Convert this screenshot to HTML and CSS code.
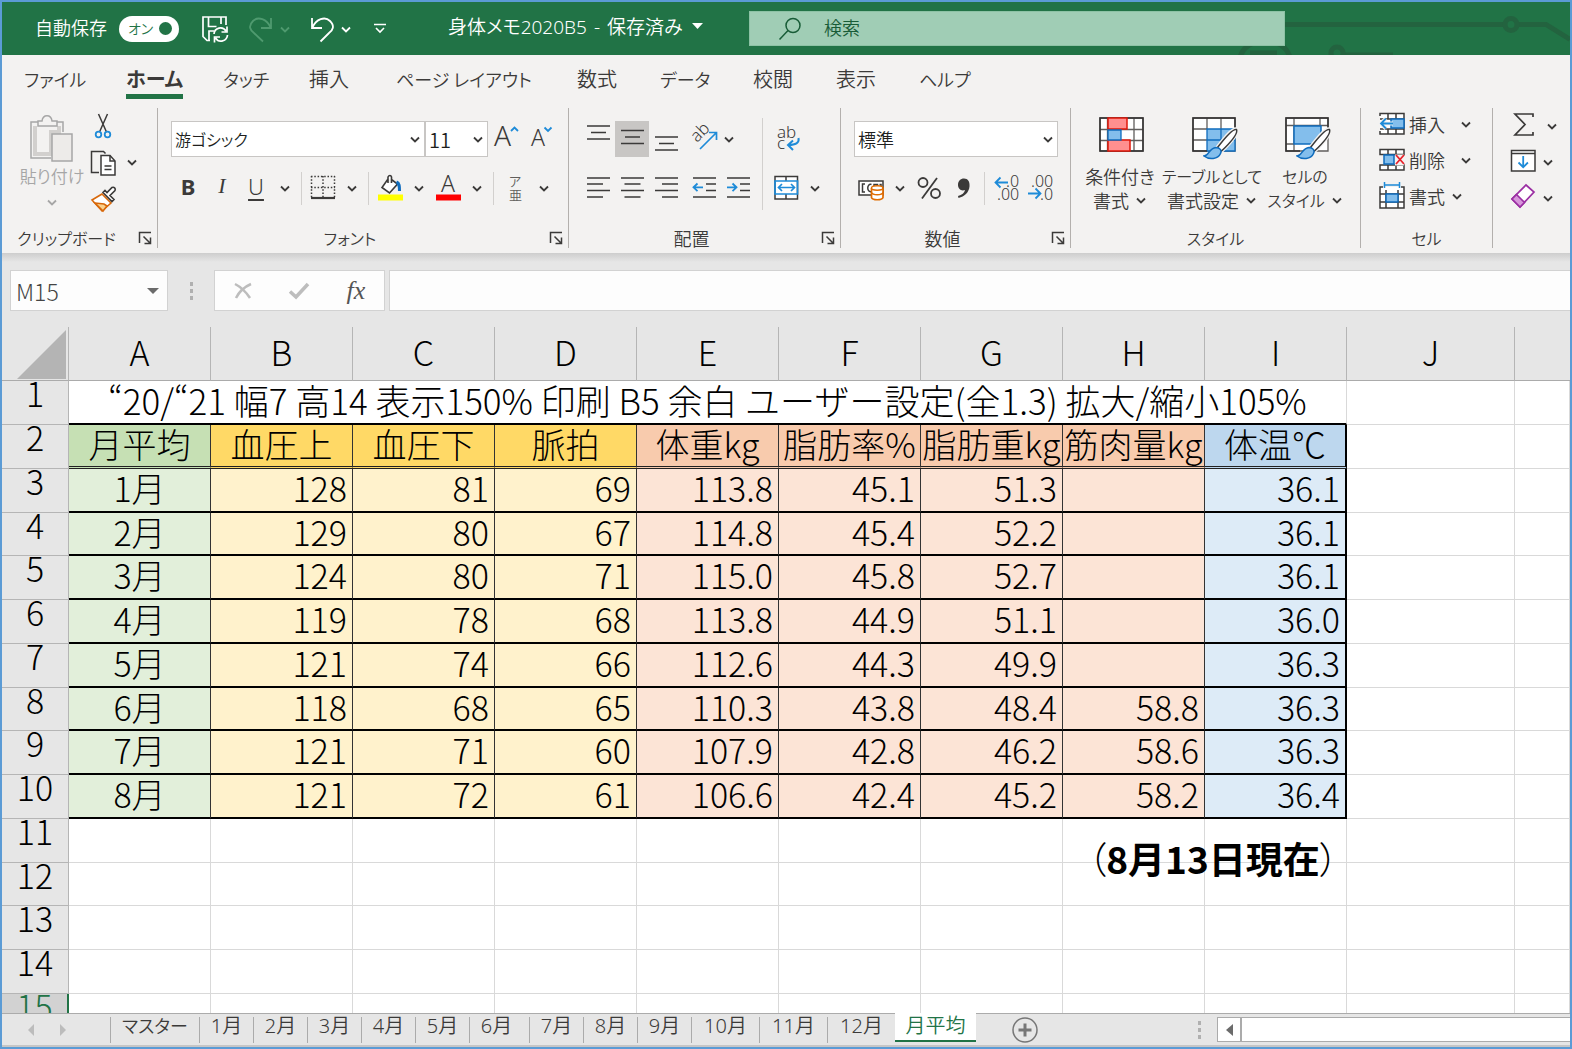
FILE: index.html
```html
<!DOCTYPE html>
<html lang="ja">
<head>
<meta charset="utf-8">
<title>身体メモ2020B5</title>
<link rel="stylesheet" href="styles.css">
</head>
<body>
<svg class="defs" aria-hidden="true">
  <symbol id="chev" viewBox="0 0 24 36"><path d="M8 16.5l4 4 4-4" fill="none" stroke="currentColor" stroke-width="1.8"/></symbol>
  <symbol id="launch" viewBox="0 0 14 14"><path d="M1.5 12V1.5H13M5.5 5.5l6.500 6.500M12.500 6.500v6h-6" fill="none" stroke="currentColor" stroke-width="1.500"/></symbol>
  <symbol id="brush" viewBox="0 0 36 34"><path d="M33.500 2.500c-3-1-8 3.500-19 18l4 3.500C29 14 35 6 33.500 2.500z" fill="#fff" stroke="#f3f2f1" stroke-width="4"/><path d="M33.500 2.500c-3-1-8 3.500-19 18l4 3.500C29 14 35 6 33.500 2.500z" fill="#fff" stroke="#3b3a39" stroke-width="1.500"/><path d="M1 29c5 0 5-8 12-8.500 4 0 6 3 4.500 6C15 32.500 6 33 1 29z" fill="#83beec" stroke="#0f6cbd" stroke-width="1.500"/></symbol>
</svg>
<div class="app">
  <header class="titlebar">
    <svg class="circuit" viewBox="0 0 340 53" width="340" height="53" fill="none" stroke="#23633f" stroke-width="5" aria-hidden="true"><path d="M40 22.500h234M286 22.500h30l24 15M113 53h50"/><circle cx="281" cy="22.500" r="6"/><circle cx="107" cy="51" r="6"/><path d="M10 55c4-12 14-16 26-16s20 5 24 16M20 51h27"/></svg>
    <div class="quick">
      <span class="autosave">自動保存</span>
      <button class="toggle" aria-label="自動保存 オン"><span>オン</span><i></i></button>
      <button class="qbtn save" aria-label="保存"><svg width="28" height="28" viewBox="0 0 28 28" fill="none" stroke="#fff" stroke-width="1.700"><path d="M9 25.500H6L2 21.500V2h23v8M7.500 2v9.500h8M20 2v7M8 25v-9h5"/><path d="M13 19a6.500 6.500 0 0 1 12-3M26 11.500V17h-5.500M26.500 20a6.500 6.500 0 0 1-12 3M13.500 27.500V22H19"/></svg></button>
      <button class="qbtn redo" aria-label="やり直し"><svg width="24" height="28" viewBox="0 0 24 28" fill="none" stroke="currentColor" stroke-width="1.800"><path d="M22 3v10H12M21.500 12.500C18 4 9 1 4 6s-3 9 1 12l9 8.500"/></svg><svg class="chev"><use href="#chev"/></svg></button>
      <button class="qbtn undo" aria-label="元に戻す"><svg width="24" height="28" viewBox="0 0 24 28" fill="none" stroke="currentColor" stroke-width="1.800"><path d="M2 3v10h10M2.500 12.500C6 4 15 1 20 6s3 9-1 12l-8.500 8.500"/></svg><svg class="chev"><use href="#chev"/></svg></button>
      <button class="qbtn custom" aria-label="クイック アクセス ツール バーのカスタマイズ"><svg width="12" height="12" viewBox="0 0 12 12" fill="none" stroke="#fff" stroke-width="1.600"><path d="M0 1.500h12M2 5l4 4 4-4"/></svg></button>
    </div>
    <button class="doc">身体メモ2020B5 <span>-</span> 保存済み <svg width="11" height="6" viewBox="0 0 11 6"><path d="M0 0h11L5.500 6z" fill="#fff"/></svg></button>
    <label class="search"><svg width="24" height="24" viewBox="0 0 24 24" fill="none" stroke="#185c37" stroke-width="1.500"><circle cx="15" cy="8.500" r="7"/><path d="M10 13.500L1.500 22.500"/></svg><input type="text" placeholder="検索" aria-label="検索"></label>
  </header>

  <nav class="tabs">
    <a href="#file" class="kana">ファイル</a><a href="#home" class="on">ホーム</a><a href="#touch" class="kana">タッチ</a><a href="#insert">挿入</a><a href="#layout" class="kana">ページ レイアウト</a><a href="#formula">数式</a><a href="#data" class="kana">データ</a><a href="#review">校閲</a><a href="#view">表示</a><a href="#help" class="kana">ヘルプ</a>
  </nav>

  <div class="ribbon">
    <section class="group g-clip">
      <div class="body split">
        <button class="paste" disabled>
          <svg width="44" height="48" viewBox="0 0 44 48" fill="none" stroke="#a6a6a6" stroke-width="1.500"><path d="M8 8H1v36h20M26 8h7v10"/><path d="M5 12v28h16V18h8v-6" stroke="#d2d0ce" stroke-width="4"/><path d="M8 12V7h4c1-7 9-7 10 0h5v5z" fill="#f3f2f1"/><path d="M22 20h20v27H22z" fill="#edebe9"/></svg>
          <span>貼り付け</span>
          <svg class="chev short"><use href="#chev"/></svg>
        </button>
        <div class="stack">
          <div class="row"><button class="ib" aria-label="切り取り"><svg viewBox="0 0 34 36" fill="none" stroke="#3b3a39" stroke-width="1.500"><path d="M12.500 6l8 18M21.500 6l-8 18"/><g stroke="#1e8bd8" stroke-width="1.800"><circle cx="12.500" cy="26.500" r="2.800"/><circle cx="21.500" cy="26.500" r="2.800"/></g></svg></button></div>
          <div class="row"><button class="ib" aria-label="コピー"><svg viewBox="0 0 34 36" fill="none" stroke="#3b3a39" stroke-width="1.500"><path d="M13 28.500H5.500v-21h12l2 2"/><path d="M15 11.500h9l5 5.500v14H15z" fill="#fff"/><path d="M24 11.500V17h5M18.500 22h7M18.500 25.500h7"/></svg></button><button class="cb" aria-label="コピーのオプション"><svg class="chev"><use href="#chev"/></svg></button></div>
          <div class="row"><button class="ib" aria-label="書式のコピー"><svg viewBox="0 0 34 36" fill="none" stroke-width="1.600"><path d="M16 14L6 20l10 11 9-8z" fill="#fff" stroke="#d8690c"/><path d="M9 23l9 1 3 2-4 5z" fill="#fbd28d" stroke="#d8690c"/><path d="M17 12.500l9 9 2-2-4-4 5-5c1-2-1-4-3-3l-5 5-2-2z" fill="#fff" stroke="#3b3a39"/></svg></button></div>
        </div>
      </div>
      <footer class="kana"><span>クリップボード</span><button class="launch" aria-label="クリップボードの詳細"><svg><use href="#launch"/></svg></button></footer>
    </section>

    <section class="group g-font">
      <div class="body lines">
        <div class="row">
          <label class="sel w-font"><select class="kana" aria-label="フォント"><option>游ゴシック</option></select><svg class="chev"><use href="#chev"/></svg></label>
          <label class="sel w-size"><select aria-label="フォント サイズ"><option>11</option></select><svg class="chev"><use href="#chev"/></svg></label>
          <button class="ib" aria-label="拡大"><svg viewBox="0 0 34 36"><text x="6" y="25" font-size="28">A</text><path d="M23 10l3.500-3.500L30 10" fill="none" stroke="#1e8bd8" stroke-width="1.800"/></svg></button>
          <button class="ib" aria-label="縮小"><svg viewBox="0 0 34 36"><text x="9" y="25" font-size="23">A</text><path d="M22.500 6.500L26 10l3.500-3.500" fill="none" stroke="#1e8bd8" stroke-width="1.800"/></svg></button>
        </div>
        <div class="row">
          <button class="ib txt bold">B</button><button class="ib txt italic">I</button><button class="ib txt under">U</button><button class="cb" aria-label="下線"><svg class="chev"><use href="#chev"/></svg></button><i class="sep"></i>
          <button class="ib" aria-label="罫線"><svg viewBox="0 0 34 36" fill="none" stroke="#3b3a39"><path d="M5 6.500h24M5 17.500h24M5.500 6v22M17 6v22M28.500 6v22" stroke-width="1.500" stroke-dasharray="1.500 1.800"/><path d="M5 28h24" stroke-width="2.200"/></svg></button><button class="cb" aria-label="罫線の種類"><svg class="chev"><use href="#chev"/></svg></button><i class="sep"></i>
          <button class="ib" aria-label="塗りつぶし"><svg viewBox="0 0 34 36" fill="none"><path d="M15 9l-6 8.500 7.500 5.500 8-9-6-4.500M15 13V7c1-2 3-2 3.500 0v6" stroke="#3b3a39" stroke-width="1.600" fill="#fff"/><path d="M23.500 12c3 1 3 4 3 9" stroke="#0f6cbd" stroke-width="3"/><path d="M5 24.500h25v6H5z" fill="#ff0"/></svg></button><button class="cb" aria-label="塗りつぶしの色"><svg class="chev"><use href="#chev"/></svg></button>
          <button class="ib" aria-label="文字色"><svg viewBox="0 0 34 36"><text x="10" y="22" font-size="23">A</text><path d="M5 24.500h25v6H5z" fill="#f00"/></svg></button><button class="cb" aria-label="フォントの色"><svg class="chev"><use href="#chev"/></svg></button><i class="sep"></i>
          <button class="ib" aria-label="ふりがな"><svg viewBox="0 0 34 36" class="dim"><text x="11" y="16" font-size="13">ア</text><text x="11" y="30" font-size="13">亜</text></svg></button><button class="cb" aria-label="ふりがなの設定"><svg class="chev"><use href="#chev"/></svg></button>
        </div>
      </div>
      <footer class="kana"><span>フォント</span><button class="launch" aria-label="フォントの詳細"><svg><use href="#launch"/></svg></button></footer>
    </section>

    <section class="group g-align">
      <div class="body split">
        <div class="lines">
          <div class="row">
            <button class="ib" aria-label="上揃え"><svg viewBox="0 0 34 36" class="ln"><path d="M6 5h23M10 11.500h15M6 18h23"/></svg></button>
            <button class="ib on" aria-label="上下中央揃え"><svg viewBox="0 0 34 36" class="ln"><path d="M6 9.500h23M10 16h15M6 22.500h23"/></svg></button>
            <button class="ib" aria-label="下揃え"><svg viewBox="0 0 34 36" class="ln"><path d="M6 16h23M10 22.500h15M6 29h23"/></svg></button>
            <button class="ib shift" aria-label="方向"><svg viewBox="0 0 34 36"><text x="10" y="22" font-size="17" transform="rotate(-45 10 22)">ab</text><path d="M13 28L29 12M22 11.500h7.500V19" fill="none" stroke="#1e8bd8" stroke-width="1.700"/></svg></button><button class="cb slim" aria-label="方向の種類"><svg class="chev"><use href="#chev"/></svg></button>
          </div>
          <div class="row">
            <button class="ib" aria-label="左揃え"><svg viewBox="0 0 34 36" class="ln"><path d="M6 8h23M6 14h16M6 20.500h23M6 27h16"/></svg></button>
            <button class="ib" aria-label="中央揃え"><svg viewBox="0 0 34 36" class="ln"><path d="M6 8h23M9.500 14h16M6 20.500h23M9.500 27h16"/></svg></button>
            <button class="ib" aria-label="右揃え"><svg viewBox="0 0 34 36" class="ln"><path d="M6 8h23M13 14h16M6 20.500h23M13 27h16"/></svg></button>
            <button class="ib shift" aria-label="インデントを減らす"><svg viewBox="0 0 34 36" class="ln"><path d="M6 8h23M19 14h10M19 20.500h10M6 27h23"/><path class="bl" d="M16 17.300H7M10.500 13.500l-4 3.800 4 3.800"/></svg></button>
            <button class="ib" aria-label="インデントを増やす"><svg viewBox="0 0 34 36" class="ln"><path d="M6 8h23M19 14h10M19 20.500h10M6 27h23"/><path class="bl" d="M6 17.300h9M11.500 13.500l4 3.800-4 3.800"/></svg></button>
          </div>
        </div>
        <i class="sep tall"></i>
        <div class="lines">
          <div class="row"><button class="ib" aria-label="折り返して全体を表示"><svg viewBox="0 0 34 36"><text x="8" y="17" font-size="17">ab</text><text x="8" y="28" font-size="17">c</text><path d="M29.500 17c1 5-3 7-10 7M24 19.500L19 24l5 5" fill="none" stroke="#1e8bd8" stroke-width="2"/></svg></button></div>
          <div class="row"><button class="ib" aria-label="セルを結合して中央揃え"><svg viewBox="0 0 34 36" fill="none" stroke="#3b3a39" stroke-width="1.500"><path d="M6 6.500h22.500V29H6zM17 6v5M17 24v5" fill="#fff"/><path d="M6 11h22.500v13H6zM9.500 17.500h16M13 14l-3.500 3.500L13 21M22 14l3.500 3.500L22 21" stroke="#1e8bd8" stroke-width="1.700"/></svg></button><button class="cb" aria-label="結合の種類"><svg class="chev"><use href="#chev"/></svg></button></div>
        </div>
      </div>
      <footer><span>配置</span><button class="launch" aria-label="配置の詳細"><svg><use href="#launch"/></svg></button></footer>
    </section>

    <section class="group g-num">
      <div class="body lines">
        <div class="row"><label class="sel w-num"><select aria-label="数値の書式"><option>標準</option></select><svg class="chev"><use href="#chev"/></svg></label></div>
        <div class="row">
          <button class="ib" aria-label="通貨"><svg viewBox="0 0 34 36" fill="none" stroke="#3b3a39" stroke-width="1.500"><path d="M5 11h24v14H5z" fill="#fff"/><path d="M11 14H8.500v8H11M17.500 14.500c-5-1.500-5 8.500 0 7M20 19.500V14.500h3.500V18M25.500 14.500h1.500v4"/><path d="M17.500 18v9.500c1 3 10.500 3 11.500 0V18" fill="#fff" stroke="#e06c00" stroke-width="1.700"/><ellipse cx="23.200" cy="18" rx="5.700" ry="2.200" fill="#fff" stroke="#e06c00"/><path d="M17.500 22.500c1 3 10.500 3 11.500 0" stroke="#e06c00"/></svg></button><button class="cb" aria-label="通貨の種類"><svg class="chev"><use href="#chev"/></svg></button>
          <button class="ib" aria-label="パーセント"><svg viewBox="0 0 34 36" fill="none" stroke="#3b3a39" stroke-width="1.800"><circle cx="11" cy="12.500" r="4.500"/><circle cx="23.500" cy="23.500" r="4.500"/><path d="M25 8L10 28.500"/></svg></button>
          <button class="ib" aria-label="桁区切り"><svg viewBox="0 0 34 36"><path d="M18 8.500c4 0 6 3 5.500 8-.6 6-5 10-11 11.500l-.5-2c4-1 6.500-3 7-6-4 1.500-7-1.500-7-5 0-4 2.500-6.500 6-6.500z" fill="#3b3a39"/></svg></button><i class="sep"></i>
          <button class="ib" aria-label="小数点以下の表示桁数を増やす"><svg viewBox="0 0 34 36"><text x="17" y="17" font-size="16">.0</text><text x="8" y="30" font-size="16">.00</text><path class="bl" d="M19 12.500H6.500M11.500 7.500l-5 5 5 5"/></svg></button>
          <button class="ib" aria-label="小数点以下の表示桁数を減らす"><svg viewBox="0 0 34 36"><text x="8" y="17" font-size="16">.00</text><text x="17" y="30" font-size="16">.0</text><path class="bl" d="M5 23.500h12.500M12.500 18.500l5 5-5 5"/></svg></button>
        </div>
      </div>
      <footer><span>数値</span><button class="launch" aria-label="数値の詳細"><svg><use href="#launch"/></svg></button></footer>
    </section>

    <section class="group g-style">
      <div class="body split">
        <button class="big b1"><svg width="48" height="44" viewBox="0 0 48 44" fill="none" stroke="#605e5c" stroke-width="1.300"><path d="M4 2h43v33H4z" fill="#fff"/><path d="M4 13.500h43M4 24.500h43M11.500 2v33M38 2v33"/><path d="M4 2h43v33H4z" stroke="#323130" stroke-width="1.500"/><path d="M12 2h19v11H12zM12 24h22v11H12z" fill="#ff8f8f" stroke="#e0190b" stroke-width="1.500"/><path d="M12 14h13v10H12z" fill="#83beec" stroke="#0f6cbd"/></svg><span>条件付き</span><span>書式<svg class="chev short"><use href="#chev"/></svg></span></button>
        <button class="big b2"><svg width="42" height="44" viewBox="0 0 42 44" fill="none" stroke="#605e5c" stroke-width="1.300"><path d="M2 2h42v33H2z" fill="#fff"/><path d="M16 13h28v22H16z" fill="#83beec" stroke="none"/><path d="M2 13h14M2 24h14M16 2v11M30 2v11"/><path d="M16 35V13h28v22zM16 24h28M30 13v22" stroke="#0f6cbd"/><path d="M44 11V2H2v33h14" stroke="#323130" stroke-width="1.500"/><use href="#brush" x="12" y="11" width="36" height="34"/></svg><span class="kana">テーブルとして</span><span>書式設定<svg class="chev short"><use href="#chev"/></svg></span></button>
        <button class="big b3"><svg width="42" height="44" viewBox="0 0 42 44" fill="none" stroke="#605e5c" stroke-width="1.300"><path d="M2 2h42v33H2z" fill="#fff"/><path d="M2 9.500h42M10 2v33M36 2v8M2 28h8"/><path d="M10 10h27v18H10z" fill="#83beec" stroke="#0f6cbd" stroke-width="1.500"/><path d="M44 11V2H2v33h14" stroke="#323130" stroke-width="1.500"/><use href="#brush" x="12" y="11" width="36" height="34"/></svg><span class="kana">セルの</span><span class="kana">スタイル<svg class="chev short"><use href="#chev"/></svg></span></button>
      </div>
      <footer class="kana"><span>スタイル</span></footer>
    </section>

    <section class="group g-cell">
      <div class="body">
        <button class="cmd"><svg width="26" height="24" viewBox="0 0 26 24" fill="none" stroke="#3b3a39" stroke-width="1.500"><path d="M1 4V1.500h24V22H1v-3M9 2v5M17 2v5M9 17v5M17 17v5M1 7h24M1 17h24" fill="#fff"/><path d="M12 7h13v9H12z" fill="#83beec" stroke="#0f6cbd"/><path d="M14 11.500H2M7 6.500l-5 5 5 5" stroke="#f3f2f1" stroke-width="4"/><path d="M14 11.500H2M7 6.500l-5 5 5 5" stroke="#1e8bd8" stroke-width="1.800"/></svg><span class="wide">挿入</span><svg class="chev"><use href="#chev"/></svg></button>
        <button class="cmd"><svg width="26" height="24" viewBox="0 0 26 24" fill="none" stroke="#3b3a39" stroke-width="1.500"><path d="M1 1.500h24v5H1zM1 17h24v5H1zM9 2v5M17 2v5M9 17v5M17 17v5" fill="#fff"/><path d="M5 7h10v9H5z" fill="#83beec" stroke="#0f6cbd"/><path d="M16 6.500h9v11h-9z" fill="#f3f2f1" stroke="none"/><path d="M17 7l8 9M25 7l-8 9" stroke="#e8222a" stroke-width="1.800"/></svg><span class="wide">削除</span><svg class="chev"><use href="#chev"/></svg></button>
        <button class="cmd"><svg width="26" height="28" viewBox="0 0 26 28" fill="none" stroke="#3b3a39" stroke-width="1.500"><path d="M4 5H1v21h24V5h-3M1 12h24M1 20h24M7 8v18M19 8v18" fill="#fff"/><path d="M7 12h12v8H7z" fill="#83beec" stroke="#0f6cbd"/><path d="M5.500 3h15M5.500 0v6M20.500 0v6" stroke="#1e8bd8"/></svg><span>書式</span><svg class="chev"><use href="#chev"/></svg></button>
      </div>
      <footer class="kana"><span>セル</span></footer>
    </section>

    <section class="group g-edit">
      <div class="body">
        <div class="row"><button class="ib" aria-label="合計"><svg viewBox="0 0 34 36" fill="none" stroke="#3b3a39" stroke-width="1.700"><path d="M27 9V6H9l10 10.500L9 27h18v-3"/></svg></button><button class="cb" aria-label="合計の種類"><svg class="chev"><use href="#chev"/></svg></button></div>
        <div class="row"><button class="ib" aria-label="フィル"><svg viewBox="0 0 34 36" fill="none" stroke="#3b3a39" stroke-width="1.500"><path d="M5.500 6.500h23.500V27H5.500z" fill="#fff"/><path d="M5.500 9.500h23.500"/><path class="bl" d="M17.200 12v11M12.500 18.500l4.700 4.700 4.700-4.700"/></svg></button><button class="cb slim" aria-label="フィルの種類"><svg class="chev"><use href="#chev"/></svg></button></div>
        <div class="row"><button class="ib" aria-label="クリア"><svg viewBox="0 0 34 36" fill="none" stroke="#9b2fa3" stroke-width="1.700"><path d="M20 5l8 7-14 15-8-8z" fill="#fff"/><path d="M10.500 14.500l8 8L14 27l-8-8z" fill="#d796db"/></svg></button><button class="cb slim" aria-label="クリアの種類"><svg class="chev"><use href="#chev"/></svg></button></div>
      </div>
    </section>
  </div>

  <div class="formula">
    <label class="namebox"><input type="text" value="M15" aria-label="名前ボックス"><svg width="12" height="6" viewBox="0 0 12 6"><path d="M0 0h12L6 6z" fill="#6b6b6b"/></svg></label>
    <span class="dots"><i></i><i></i><i></i></span>
    <div class="fxbox">
      <button aria-label="キャンセル"><svg width="18" height="18" viewBox="0 0 18 18" fill="none" stroke="#bdbdbd" stroke-width="2.500"><path d="M1 2c6 3 11 8 15 14M17 2C10 5 5 10 2 16"/></svg></button>
      <button aria-label="入力"><svg width="20" height="18" viewBox="0 0 20 18" fill="none" stroke="#bdbdbd" stroke-width="3.500"><path d="M1 9.500l6 5.500L19 2"/></svg></button>
      <button class="fx" aria-label="関数の挿入">fx</button>
    </div>
    <input class="fxinput" type="text" aria-label="数式バー">
  </div>

  <main class="sheet">
    <table>
      <colgroup><col class="c-row"><col class="c-data" span="9"><col class="c-j"><col></colgroup>
      <thead><tr><th class="corner"><svg width="49" height="49" viewBox="0 0 49 49"><path d="M49 0v49H0z" fill="#b4b4b4"/></svg></th><th>A</th><th>B</th><th>C</th><th>D</th><th>E</th><th>F</th><th>G</th><th>H</th><th>I</th><th>J</th><th></th></tr></thead>
      <tbody>
        <tr class="title"><th>1</th><td colspan="9">“20/“21 幅7 高14 表示150% 印刷 B5 余白 ユーザー設定(全1.3) 拡大/縮小105%</td><td></td><td></td></tr>
        <tr class="head"><th>2</th><td class="g">月平均</td><td class="y">血圧上</td><td class="y">血圧下</td><td class="y">脈拍</td><td class="o">体重kg</td><td class="o">脂肪率%</td><td class="o">脂肪重kg</td><td class="o">筋肉量kg</td><td class="b">体温℃</td><td></td><td></td></tr>
        <tr class="data"><th>3</th><td class="g">1月</td><td class="y">128</td><td class="y">81</td><td class="y">69</td><td class="o">113.8</td><td class="o">45.1</td><td class="o">51.3</td><td class="o"></td><td class="b">36.1</td><td></td><td></td></tr>
        <tr class="data"><th>4</th><td class="g">2月</td><td class="y">129</td><td class="y">80</td><td class="y">67</td><td class="o">114.8</td><td class="o">45.4</td><td class="o">52.2</td><td class="o"></td><td class="b">36.1</td><td></td><td></td></tr>
        <tr class="data"><th>5</th><td class="g">3月</td><td class="y">124</td><td class="y">80</td><td class="y">71</td><td class="o">115.0</td><td class="o">45.8</td><td class="o">52.7</td><td class="o"></td><td class="b">36.1</td><td></td><td></td></tr>
        <tr class="data"><th>6</th><td class="g">4月</td><td class="y">119</td><td class="y">78</td><td class="y">68</td><td class="o">113.8</td><td class="o">44.9</td><td class="o">51.1</td><td class="o"></td><td class="b">36.0</td><td></td><td></td></tr>
        <tr class="data"><th>7</th><td class="g">5月</td><td class="y">121</td><td class="y">74</td><td class="y">66</td><td class="o">112.6</td><td class="o">44.3</td><td class="o">49.9</td><td class="o"></td><td class="b">36.3</td><td></td><td></td></tr>
        <tr class="data"><th>8</th><td class="g">6月</td><td class="y">118</td><td class="y">68</td><td class="y">65</td><td class="o">110.3</td><td class="o">43.8</td><td class="o">48.4</td><td class="o">58.8</td><td class="b">36.3</td><td></td><td></td></tr>
        <tr class="data"><th>9</th><td class="g">7月</td><td class="y">121</td><td class="y">71</td><td class="y">60</td><td class="o">107.9</td><td class="o">42.8</td><td class="o">46.2</td><td class="o">58.6</td><td class="b">36.3</td><td></td><td></td></tr>
        <tr class="data"><th>10</th><td class="g">8月</td><td class="y">121</td><td class="y">72</td><td class="y">61</td><td class="o">106.6</td><td class="o">42.4</td><td class="o">45.2</td><td class="o">58.2</td><td class="b">36.4</td><td></td><td></td></tr>
        <tr><th>11</th><td></td><td></td><td></td><td></td><td></td><td></td><td></td><td></td><td></td><td></td><td></td></tr>
        <tr><th>12</th><td></td><td></td><td></td><td></td><td></td><td></td><td></td><td></td><td></td><td></td><td></td></tr>
        <tr><th>13</th><td></td><td></td><td></td><td></td><td></td><td></td><td></td><td></td><td></td><td></td><td></td></tr>
        <tr><th>14</th><td></td><td></td><td></td><td></td><td></td><td></td><td></td><td></td><td></td><td></td><td></td></tr>
        <tr class="current"><th>15</th><td></td><td></td><td></td><td></td><td></td><td></td><td></td><td></td><td></td><td></td><td></td></tr>
      </tbody>
    </table>
    <div class="note"><span>（</span>8月13日現在<span>）</span></div>
  </main>

  <footer class="sheets">
    <div class="nav"><button aria-label="前のシート"><svg width="6" height="12" viewBox="0 0 6 12"><path d="M6 0v12L0 6z" fill="#bcbcbc"/></svg></button><button aria-label="次のシート"><svg width="6" height="12" viewBox="0 0 6 12"><path d="M0 0v12l6-6z" fill="#bcbcbc"/></svg></button></div>
    <button class="tab master kana">マスター</button><button class="tab">1月</button><button class="tab">2月</button><button class="tab">3月</button><button class="tab">4月</button><button class="tab">5月</button><button class="tab june">6月</button><button class="tab">7月</button><button class="tab">8月</button><button class="tab">9月</button><button class="tab two">10月</button><button class="tab two">11月</button><button class="tab two">12月</button><button class="tab active">月平均</button>
    <button class="add" aria-label="新しいシート"><svg width="26" height="26" viewBox="0 0 26 26" fill="none" stroke="#767676"><circle cx="13" cy="13" r="12" stroke-width="1.500"/><path d="M13 6.500v13M6.500 13h13" stroke-width="3"/></svg></button>
    <span class="dots"><i></i><i></i><i></i></span>
    <div class="scroll"><button aria-label="左へスクロール"><svg width="7" height="12" viewBox="0 0 7 12"><path d="M7 0v12L0 6z" fill="#6b6b6b"/></svg></button><div class="track"></div></div>
  </footer>
</div>
</body>
</html>
```
FILE: styles.css
```css
* { box-sizing: border-box; }
body {
  margin: 0;
  font-family: "Noto Sans CJK JP", sans-serif;
  font-size: 18px;
  font-weight: 350;
  color: #3b3a39;
}
button, input, select { font: inherit; color: inherit; }
button { border: 0; padding: 0; background: none; }
svg { flex: none; display: block; overflow: visible; }
.defs { position: absolute; width: 0; height: 0; }
.app {
  display: flex;
  flex-direction: column;
  height: 100vh;
  border: 2px solid #5b9bd5;
  background: #e6e6e6;
  overflow: hidden;
}
.chev { width: 24px; height: 36px; }
.chev.short { margin-top: -6px; margin-bottom: -6px; }

/* title bar */
.titlebar {
  position: relative;
  display: flex;
  align-items: center;
  flex: none;
  height: 53px;
  padding-right: 285px;
  background: #217346;
  color: #fff;
  font-feature-settings: "palt";
  overflow: hidden;
}
.circuit { position: absolute; right: 0; top: 0; }
.quick { display: flex; align-items: center; width: 444px; padding-left: 33px; }
.autosave { width: 84px; padding-bottom: 4px; white-space: nowrap; }
.toggle {
  display: flex;
  align-items: center;
  justify-content: space-between;
  width: 60px;
  height: 26px;
  padding: 0 7px 0 9px;
  border-radius: 13px;
  background: #fff;
  color: #217346;
  font-size: 14px;
  line-height: 22px;
}
.toggle span { padding-bottom: 2px; }
.toggle i { width: 13px; height: 13px; border-radius: 50%; background: #217346; }
.qbtn { display: flex; align-items: center; height: 36px; color: #fff; }
.save { margin-left: 22px; }
.redo { margin-left: 20px; color: #4f9a6f; }
.undo { margin-left: 13px; }
.custom { margin-left: 16px; }
.doc { display: flex; align-items: center; gap: 7px; width: 303px; padding: 0 0 6px 2px; font-family: "Noto Sans", "Noto Sans CJK JP", sans-serif; font-size: 19px; white-space: nowrap; }
.doc svg { margin-left: 2px; }
.search {
  position: relative;
  display: flex;
  align-items: center;
  gap: 22px;
  flex: 1;
  height: 35px;
  padding-left: 28px;
  background: #a0cdb5;
  border: 1px solid #8dc2a5;
  color: #185c37;
}
.search input { flex: 1; min-width: 0; border: 0; background: none; padding: 0 0 3px; outline: 0; }
.search input::placeholder { color: #185c37; opacity: 1; }

/* ribbon tabs */
.tabs {
  display: grid;
  grid-template-columns: 102px 97px 86px 87px 181px 83px 93px 83px 83px 1fr;
  flex: none;
  height: 50px;
  padding-left: 22px;
  background: #f3f2f1;
  font-size: 20px;
  line-height: 48px;
  font-feature-settings: "palt";
}
.tabs a { justify-self: start; height: 44px; color: inherit; text-decoration: none; white-space: nowrap; }
.tabs .kana { font-size: 18px; }
.tabs .on { font-weight: 700; border-bottom: 5px solid #217346; }

/* ribbon */
.ribbon { display: flex; flex: none; height: 148px; padding: 3px 0 5px; background: #f3f2f1; font-feature-settings: "palt"; }
.ribbon .kana { font-size: 16px; }
.group { display: flex; flex-direction: column; flex: none; border-right: 1px solid #b3b0ad; }
.g-clip { width: 156px; }
.g-font { width: 411px; }
.g-align { width: 272px; }
.g-num { width: 230px; }
.g-style { width: 290px; }
.g-cell { width: 132px; }
.g-edit { flex: 1; border: 0; }
.body { flex: 1; }
.split { display: flex; }
.lines { display: flex; flex-direction: column; gap: 13px; padding-top: 13px; }
.g-font .body, .g-num .body { padding-left: 13px; }
.g-align .body, .g-style .body { padding-left: 12px; }
.g-cell .body { padding-left: 18px; }
.g-edit .body { padding-left: 13px; }
.row { display: flex; height: 36px; }
.group footer { display: flex; align-items: center; height: 20px; line-height: 20px; }
.group footer span { flex: 1; text-align: center; white-space: nowrap; }
.launch { width: 26px; padding-left: 7px; }
.launch svg { width: 14px; height: 14px; }
.ib { flex: none; width: 34px; height: 36px; }
.ib svg { width: 34px; height: 36px; }
.ib.on { background: #c8c6c4; }
.ib.shift { margin-left: 4px; }
.ib text { font-family: "Noto Sans", "Noto Sans CJK JP", sans-serif; fill: #3b3a39; }
.ib .dim text { fill: #605e5c; }
.ln { fill: none; stroke: #3b3a39; stroke-width: 1.5; }
.bl { fill: none; stroke: #1e8bd8; stroke-width: 1.8; }
.txt { font-family: "Noto Sans", sans-serif; font-size: 22px; line-height: 32px; padding-bottom: 4px; }
.bold { font-weight: 700; }
.italic { font-family: "Liberation Serif", serif; font-style: italic; font-weight: 400; }
.under { text-decoration: underline; text-underline-offset: 4px; }
.cb { flex: none; width: 24px; height: 36px; }
.cb.slim { width: 16px; display: flex; justify-content: center; }
.sep { flex: none; width: 1px; height: 33px; margin: 2px 4px; background: #d2d0ce; }
.sep.tall { height: 92px; margin: 10px 6px 0 7px; }
.sel { display: grid; height: 36px; }
.sel select {
  grid-area: 1 / 1;
  appearance: none;
  width: 100%;
  padding: 0 20px 0 3px;
  border: 1px solid #c8c6c4;
  background: #fff;
  color: #201f1e;
  font-feature-settings: "palt";
}
.sel .chev { grid-area: 1 / 1; justify-self: end; pointer-events: none; margin-right: -2px; }
.w-font { width: 254px; }
.w-size { width: 63px; }
.w-num { width: 204px; }
.w-size select { font-size: 20px; }
.paste { display: flex; flex-direction: column; align-items: center; width: 84px; padding: 6px 0 0 16px; color: #a6a6a6; line-height: 28px; }
.paste span { font-size: 17px; white-space: nowrap; }
.big { display: flex; flex-direction: column; align-items: center; padding-top: 8px; line-height: 24px; white-space: nowrap; }
.big > svg { margin-bottom: 4px; }
.big span { display: flex; }
.big .chev { margin-right: -6px; }
.b1 { width: 74px; }
.b2 { width: 110px; }
.b3 { width: 76px; }
.cmd { display: flex; align-items: center; gap: 4px; height: 36px; padding-bottom: 4px; white-space: nowrap; }
.cmd .chev { margin-left: -4px; }
.cmd .wide { margin-right: 9px; }

/* formula bar */
.formula {
  display: flex;
  flex: none;
  height: 74px;
  padding: 17px 0 16px 8px;
  background: linear-gradient(#cdcdcd, #e6e6e6 9px);
}
.namebox { display: flex; align-items: center; width: 158px; padding: 0 8px 0 5px; border: 1px solid #d2d2d2; background: #fdfdfd; font-size: 23px; font-weight: 300; }
.namebox input { flex: 1; min-width: 0; width: 0; padding: 0; border: 0; background: none; color: #444; }
.dots { display: flex; flex-direction: column; align-items: center; justify-content: center; gap: 3px; width: 46px; }
.dots i { width: 3px; height: 4px; background: #b0b0b0; }
.fxbox { display: flex; align-items: center; justify-content: space-around; width: 171px; border: 1px solid #d2d2d2; background: #fdfdfd; }
.fx { font: italic 26px "Liberation Serif", serif; color: #555; }
.fxinput { flex: 1; min-width: 0; margin-left: 4px; border: 1px solid #d2d2d2; border-right: 0; background: #fdfdfd; }

/* worksheet */
.sheet { position: relative; flex: 1; min-height: 0; overflow: hidden; background: #fff; border-bottom: 1px solid #ababab; font-weight: 300; }
table { width: 100%; table-layout: fixed; border-collapse: separate; border-spacing: 0; font-size: 34px; color: #000; }
.c-row { width: 67px; }
.c-data { width: 142px; }
.c-j { width: 168px; }
th, td { padding: 0; border: 0 solid #d9d9d9; border-width: 0 1px 1px 0; vertical-align: top; font-weight: inherit; white-space: nowrap; line-height: 38px; }
thead th { height: 54px; line-height: 50px; background: #e6e6e6; border-color: #b5b5b5; border-bottom-color: #ababab; }
thead th:last-child { border-right: 0; }
.corner svg { margin: 3px 0 0 15px; }
tbody tr { height: 44px; }
tbody tr:nth-child(4n) { height: 43px; }
tbody th { line-height: 24px; background: #e6e6e6; border-color: #b5b5b5; }
.title td:nth-child(2) { text-align: center; font-size: 35px; border-color: #000; border-bottom-width: 2px; border-right-color: #d9d9d9; }
.head td { text-align: center; }
.data td { text-align: right; padding-right: 5px; }
.data .g { text-align: center; padding-right: 0; }
.g, .y, .o, .b { border-right-color: #333; }
.b { border-right: 2px solid #000; }
.head .g, .head .y, .head .o, .head .b { border-bottom: 3px double #222; }
.data .g, .data .y, .data .o, .data .b { border-bottom: 2px solid #000; }
.g { background: #e2efda; }
.y { background: #fff2cc; }
.o { background: #fce4d6; }
.b { background: #ddebf7; }
.head .g { background: #c6e0b4; }
.head .y { background: #ffd966; }
.head .o { background: #f8cbad; }
.head .b { background: #bdd7ee; }
.current th { background: #d2d2d2; color: #217346; border-right: 2px solid #217346; }
.note { position: absolute; left: 1061px; top: 504px; width: 300px; text-align: center; font-size: 37px; line-height: 54px; font-weight: 700; color: #000; white-space: nowrap; font-feature-settings: "palt"; }
.note span { font-weight: 300; }

/* sheet tabs */
.sheets { display: flex; flex: none; height: 33px; border-bottom: 2px solid #c6c6c6; font-family: "Noto Sans", "Noto Sans CJK JP", sans-serif; font-size: 20px; font-feature-settings: "palt"; }
.nav { display: flex; align-items: center; gap: 26px; width: 108px; padding-left: 26px; }
.tab { display: flex; align-items: flex-start; justify-content: center; width: 54px; height: 26px; margin-top: 3px; line-height: 18px; border-left: 1px solid #ababab; white-space: nowrap; }
.sheets .kana { font-size: 18px; }
.master { width: 89px; }
.june { width: 60px; padding-right: 6px; }
.two { width: 68px; }
.active { width: 81px; height: 29px; margin-top: -1px; padding-top: 4px; border: 0; border-bottom: 2px solid #217346; background: #fff; color: #217346; position: relative; }
.add { margin-left: 36px; }
.sheets .dots { margin-left: auto; width: 36px; }
.scroll { display: flex; width: 353px; height: 25px; margin-top: 3px; border: 1px solid #ababab; border-right: 0; background: #fff; }
.scroll button { display: flex; align-items: center; justify-content: center; width: 24px; border-right: 2px solid #ababab; }
.track { flex: 1; }
```
